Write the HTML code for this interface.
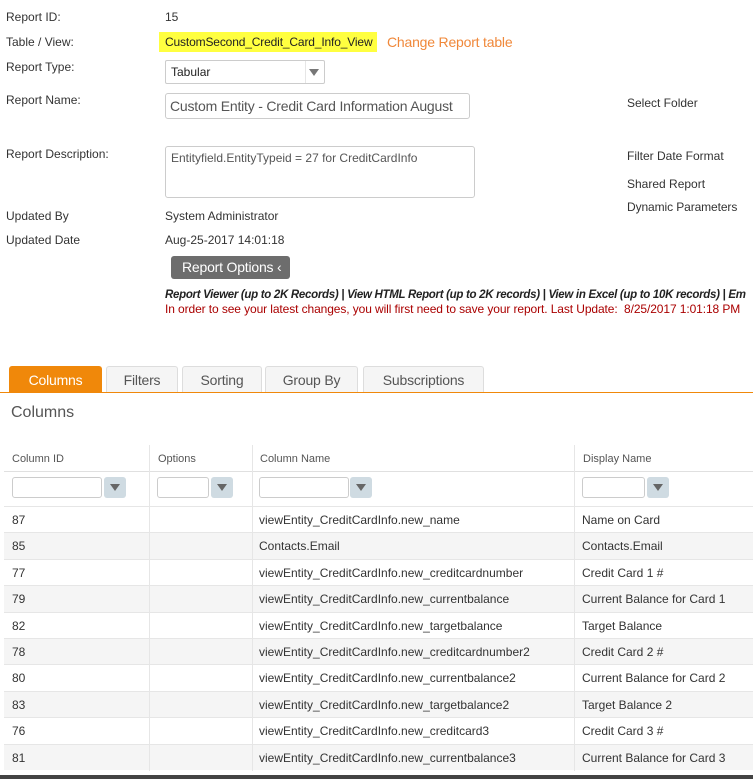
<!DOCTYPE html>
<html><head><meta charset="utf-8"><style>
*{margin:0;padding:0;box-sizing:border-box}
body{width:753px;height:779px;overflow:hidden;background:#fff;font-family:"Liberation Sans",Arial,sans-serif;color:#333;position:relative;font-size:12px}
.a{position:absolute;white-space:nowrap}
.box{position:absolute;border:1px solid #ccc;border-radius:3px;background:#fff}
.tab{position:absolute;top:366px;height:27px;background:#f5f5f5;border:1px solid #ddd;border-bottom:none;border-radius:3px 3px 0 0;color:#555;font-size:14px;text-align:center;line-height:26px;letter-spacing:-0.2px}
.row{position:absolute;left:4px;width:749px;height:26.4px;border-top:1px solid #e6e6e6;font-size:12px;color:#333}
.row span{position:absolute;top:6px}
.vl{position:absolute;width:1px;background:#e6e6e6;top:445px;height:326px}
.fi{position:absolute;top:477px;height:21px;border:1px solid #ccc;border-radius:3px;background:#fff}
.fb{position:absolute;top:477px;width:22px;height:21px;background:#cfdbe2;border-radius:3px}
.fb:after{content:"";position:absolute;left:6px;top:7px;border-left:5px solid transparent;border-right:5px solid transparent;border-top:7px solid #666}
</style></head><body>
<div class="a" style="left:6px;top:10px">Report ID:</div>
<div class="a" style="left:165px;top:10px">15</div>
<div class="a" style="left:6px;top:35px">Table / View:</div>
<div class="a" style="left:159px;top:32px;background:#ffff40;padding:3px 5px 3px 6px;color:#222;letter-spacing:-0.15px">CustomSecond_Credit_Card_Info_View</div>
<div class="a" style="left:387px;top:34px;color:#f0883a;font-size:14px;letter-spacing:-0.2px">Change Report table</div>
<div class="a" style="left:6px;top:60px">Report Type:</div>
<div class="box" style="left:165px;top:60px;width:160px;height:24px;border-radius:2px"></div>
<div class="a" style="left:171px;top:65px;color:#222">Tabular</div>
<div class="a" style="left:305px;top:61px;width:1px;height:22px;background:#e6e6e6"></div>
<div class="a" style="left:309px;top:69px;border-left:5px solid transparent;border-right:5px solid transparent;border-top:7px solid #777"></div>
<div class="a" style="left:6px;top:93px">Report Name:</div>
<div class="box" style="left:165px;top:93px;width:305px;height:26px"></div>
<div class="a" style="left:170px;top:98px;font-size:14px;color:#555;letter-spacing:-0.2px">Custom Entity - Credit Card Information August</div>
<div class="a" style="left:627px;top:96px">Select Folder</div>
<div class="a" style="left:6px;top:147px">Report Description:</div>
<div class="box" style="left:165px;top:146px;width:310px;height:52px"></div>
<div class="a" style="left:171px;top:151px;color:#555">Entityfield.EntityTypeid = 27 for CreditCardInfo</div>
<div class="a" style="left:627px;top:149px">Filter Date Format</div>
<div class="a" style="left:627px;top:177px">Shared Report</div>
<div class="a" style="left:627px;top:200px;letter-spacing:-0.1px">Dynamic Parameters</div>
<div class="a" style="left:6px;top:209px">Updated By</div>
<div class="a" style="left:165px;top:209px">System Administrator</div>
<div class="a" style="left:6px;top:233px">Updated Date</div>
<div class="a" style="left:165px;top:233px">Aug-25-2017 14:01:18</div>
<div class="a" style="left:171px;top:256px;width:119px;height:23px;background:#6d6d6d;border-radius:3px;color:#fff;font-size:14px;line-height:22px;padding-left:11px;letter-spacing:-0.2px">Report Options ‹</div>
<div class="a" style="left:165px;top:289px;font-style:italic;font-weight:bold;color:#222;font-size:11.5px;letter-spacing:-0.3px">Report Viewer (up to 2K Records) | View HTML Report (up to 2K records) | View in Excel (up to 10K records) | Em</div>
<div class="a" style="left:165px;top:302px;color:#a00;font-size:12px;letter-spacing:-0.1px">In order to see your latest changes, you will first need to save your report. Last Update:&nbsp; 8/25/2017 1:01:18 PM</div>
<div class="tab" style="left:9px;width:93px;background:#f0880a;border-color:#f0880a;color:#fff">Columns</div>
<div class="tab" style="left:106px;width:72px">Filters</div>
<div class="tab" style="left:182px;width:80px">Sorting</div>
<div class="tab" style="left:265px;width:93px">Group By</div>
<div class="tab" style="left:363px;width:121px">Subscriptions</div>
<div class="a" style="left:0;top:392px;width:753px;height:1px;background:#f0880a"></div>
<div class="a" style="left:11px;top:404px;font-size:16px;color:#555">Columns</div>
<div class="a" style="left:12px;top:453px;font-size:11px;color:#555">Column ID</div>
<div class="a" style="left:158px;top:453px;font-size:11px;color:#555">Options</div>
<div class="a" style="left:260px;top:453px;font-size:11px;color:#555">Column Name</div>
<div class="a" style="left:583px;top:453px;font-size:11px;color:#555">Display Name</div>
<div class="a" style="left:4px;top:471px;width:749px;height:1px;background:#e0e0e0"></div>
<div class="fi" style="left:12px;width:90px"></div><div class="fb" style="left:104px"></div>
<div class="fi" style="left:157px;width:52px"></div><div class="fb" style="left:211px"></div>
<div class="fi" style="left:259px;width:90px"></div><div class="fb" style="left:350px"></div>
<div class="fi" style="left:582px;width:63px"></div><div class="fb" style="left:647px"></div>
<div class="row" style="top:506px"><span style="left:8px">87</span><span style="left:255px">viewEntity_CreditCardInfo.new_name</span><span style="left:578px">Name on Card</span></div>
<div class="row" style="top:532.4px;background:#f5f5f5"><span style="left:8px">85</span><span style="left:255px">Contacts.Email</span><span style="left:578px">Contacts.Email</span></div>
<div class="row" style="top:558.8px"><span style="left:8px">77</span><span style="left:255px">viewEntity_CreditCardInfo.new_creditcardnumber</span><span style="left:578px">Credit Card 1 #</span></div>
<div class="row" style="top:585.2px;background:#f5f5f5"><span style="left:8px">79</span><span style="left:255px">viewEntity_CreditCardInfo.new_currentbalance</span><span style="left:578px">Current Balance for Card 1</span></div>
<div class="row" style="top:611.6px"><span style="left:8px">82</span><span style="left:255px">viewEntity_CreditCardInfo.new_targetbalance</span><span style="left:578px">Target Balance</span></div>
<div class="row" style="top:638px;background:#f5f5f5"><span style="left:8px">78</span><span style="left:255px">viewEntity_CreditCardInfo.new_creditcardnumber2</span><span style="left:578px">Credit Card 2 #</span></div>
<div class="row" style="top:664.4px"><span style="left:8px">80</span><span style="left:255px">viewEntity_CreditCardInfo.new_currentbalance2</span><span style="left:578px">Current Balance for Card 2</span></div>
<div class="row" style="top:690.8px;background:#f5f5f5"><span style="left:8px">83</span><span style="left:255px">viewEntity_CreditCardInfo.new_targetbalance2</span><span style="left:578px">Target Balance 2</span></div>
<div class="row" style="top:717.2px"><span style="left:8px">76</span><span style="left:255px">viewEntity_CreditCardInfo.new_creditcard3</span><span style="left:578px">Credit Card 3 #</span></div>
<div class="row" style="top:743.6px;background:#f5f5f5"><span style="left:8px">81</span><span style="left:255px">viewEntity_CreditCardInfo.new_currentbalance3</span><span style="left:578px">Current Balance for Card 3</span></div>
<div class="vl" style="left:149px"></div><div class="vl" style="left:252px"></div><div class="vl" style="left:574px"></div>
<div class="a" style="left:0;top:775px;width:753px;height:4px;background:#444"></div>
</body></html>
